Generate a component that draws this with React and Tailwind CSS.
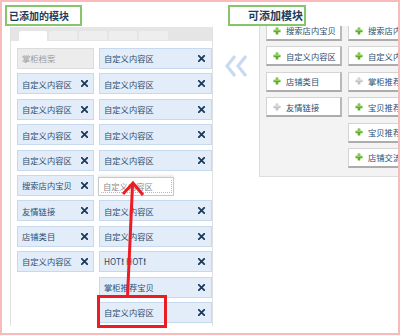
import React from "react";

const FONT = { fontFamily: '"Noto Sans CJK SC", "Noto Sans", sans-serif' };

function X() {
  return (
    <svg width="7" height="7" viewBox="0 0 7 7" className="shrink-0">
      <path d="M0.8 0.8 L6.2 6.2 M6.2 0.8 L0.8 6.2" stroke="#1b3a5c" strokeWidth="1.8" strokeLinecap="square" />
    </svg>
  );
}

function Plus({ gray }) {
  const c = gray ? "#c2c2c2" : "#5eae2c";
  const h = gray ? "#dcdcdc" : "#9bd36a";
  return (
    <svg width="8" height="8" viewBox="0 0 8 8" className="shrink-0">
      <path d="M2.7 0.5 H5.3 V2.7 H7.5 V5.3 H5.3 V7.5 H2.7 V5.3 H0.5 V2.7 H2.7 Z" fill={c} />
      <path d="M3.3 1.1 H4.7 V3.3 H6.9 V4 H1.1 V3.3 H3.3 Z" fill={h} />
    </svg>
  );
}

function Item({ label, wide, disabled, children }) {
  if (disabled) {
    return (
      <div className="flex items-center h-[21px] w-[77px] border border-[#dcdcdc] bg-[#ececec] pl-[4px] text-[8.3px] text-[#9a9a9a]">
        {label}
      </div>
    );
  }
  return (
    <div
      className={
        "flex items-center justify-between h-[21px] border border-[#c7d9ec] bg-[#e2edf9] pl-[4px] text-[8.3px] text-[#2c4d6e] " +
        (wide ? "w-[113px] pr-[6px]" : "w-[77px] pr-[5px]")
      }
    >
      <span className="leading-none">{children || label}</span>
      <X />
    </div>
  );
}

function Btn({ label, gray }) {
  return (
    <div className="flex items-center gap-[5px] h-[20px] w-[76px] shrink-0 bg-white border border-[#d4d4d4] border-b-2 border-r-2 border-b-[#acacac] border-r-[#b9b9b9] pl-[6px] text-[8.3px] text-[#2c4d6e] whitespace-nowrap overflow-hidden">
      <Plus gray={gray} />
      <span className="leading-none">{label}</span>
    </div>
  );
}

export default function App() {
  const col1 = ["自定义内容区", "自定义内容区", "自定义内容区", "自定义内容区", "搜索店内宝贝", "友情链接", "店铺类目", "自定义内容区"];
  return (
    <div style={FONT} className="relative w-[400px] h-[335px] border-2 border-[#f8baba] bg-white overflow-hidden flex flex-col">
      {/* header */}
      <div className="flex pt-[3px] pl-[3px] h-[24px] shrink-0">
        <div className="w-[77px] h-[21px] border-2 border-[#85c66a] flex items-center pl-[2px] text-[10px] font-bold text-[#1d3c5c] leading-none">
          已添加的模块
        </div>
        <div className="ml-[146px] w-[78px] h-[21px] border-2 border-[#85c66a] flex items-center justify-end pr-[1px] text-[11px] font-bold text-[#1d3c5c] leading-none">
          可添加模块
        </div>
      </div>

      {/* body */}
      <div className="flex items-start">
        {/* left panel */}
        <div className="ml-[8px] mt-[1px] w-[208px] h-[299px] border-l border-r border-[#e0e0e0] flex flex-col">
          <div className="h-[14px] bg-[#e5e5e5] flex items-end pl-[8px] gap-[2px]">
            <div className="w-[28px] h-[10px] bg-white rounded-t-[2px]" />
            <div className="w-[28px] h-[9px] mb-[1px] bg-[#eeeeee] rounded-t-[2px]" />
            <div className="w-[28px] h-[9px] mb-[1px] bg-[#eeeeee] rounded-t-[2px]" />
            <div className="w-[28px] h-[9px] mb-[1px] bg-[#eeeeee] rounded-t-[2px]" />
            <div className="w-[29px] h-[9px] mb-[1px] bg-[#eeeeee] rounded-t-[2px]" />
          </div>
          <div className="flex pt-[7px] pl-[6px] gap-[5px]">
            <div className="flex flex-col gap-[4.4px]">
              <Item label="掌柜档案" disabled />
              {col1.map((l, i) => (
                <Item key={i} label={l} />
              ))}
            </div>
            <div className="flex flex-col gap-[4.4px]">
              <Item wide label="自定义内容区" />
              <Item wide label="自定义内容区" />
              <Item wide label="自定义内容区" />
              <Item wide label="自定义内容区" />
              <Item wide label="自定义内容区" />
              <div className="h-[21px] w-[113px]" />
              <Item wide label="自定义内容区" />
              <Item wide label="自定义内容区" />
              <Item wide>
                HOT<span className="font-black">!</span> HOT<span className="font-black">!</span>
              </Item>
              <Item wide label="掌柜推荐宝贝" />
              <Item wide label="自定义内容区" />
            </div>
          </div>
        </div>

        {/* chevrons */}
        <div className="w-[46px] shrink-0 pl-[12px] pt-[29px]">
          <svg width="24" height="22" viewBox="0 0 24 22">
            <path d="M10 1 L2 11 L10 21" fill="none" stroke="#c8daf1" strokeWidth="3.2" strokeLinejoin="miter" />
            <path d="M21 1 L13 11 L21 21" fill="none" stroke="#c8daf1" strokeWidth="3.2" strokeLinejoin="miter" />
          </svg>
        </div>

        {/* right panel */}
        <div className="w-[200px] shrink-0 h-[151px] bg-[#f3f3f3] border-l border-b border-[#dedede] overflow-hidden">
          <div className="flex gap-[6px] pl-[6px] mt-[-5px]">
            <div className="flex flex-col gap-[5.4px]">
              <Btn label="搜索店内宝贝" />
              <Btn label="自定义内容区" />
              <Btn label="店铺类目" />
              <Btn label="友情链接" gray />
            </div>
            <div className="flex flex-col gap-[5.4px]">
              <Btn label="搜索店内宝贝" />
              <Btn label="自定义内容区" />
              <Btn label="掌柜推荐宝贝" gray />
              <Btn label="宝贝推荐" />
              <Btn label="宝贝推荐" />
              <Btn label="店铺交流区" />
            </div>
          </div>
        </div>
      </div>

      {/* drag ghost */}
      <div className="absolute left-[96px] top-[175px] w-[76px] h-[19px] bg-white border border-[#c9c9c9] shadow-[0_-2px_2px_rgba(0,0,0,0.08)] flex items-center pl-[4px] text-[8.3px] text-[#8a8a8a]">
        <span className="leading-none">自定义内容区</span>
        <div className="absolute left-[2px] top-[2px] right-[1px] bottom-[2px] border-b border-r border-dotted border-[#e4a2a2]" />
      </div>

      {/* red highlight box */}
      <div className="absolute left-[95px] top-[293px] w-[70px] h-[33px] border-[3px] border-[#ec1c24]" />

      {/* red arrow */}
      <svg className="absolute left-[-2px] top-[-2px] pointer-events-none" width="400" height="335" viewBox="0 0 400 335">
        <path d="M127.5 297 L132.5 185" stroke="#ec1c24" strokeWidth="3" fill="none" />
        <path d="M123 194 L133 183 L143 195" stroke="#ec1c24" strokeWidth="3" fill="none" strokeLinejoin="miter" />
      </svg>
    </div>
  );
}
